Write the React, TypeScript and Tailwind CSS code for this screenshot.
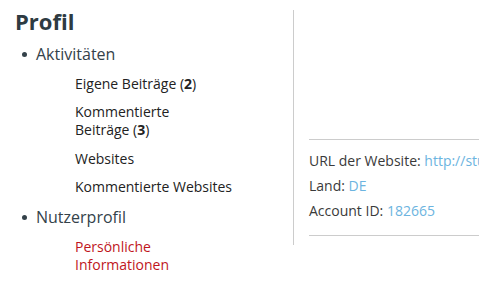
import React from 'react';

const activities = [
  { label: 'Eigene Beiträge', count: 2 },
  { label: 'Kommentierte Beiträge', count: 3, wrap: true },
  { label: 'Websites' },
  { label: 'Kommentierte Websites' },
];

const details = [
  { label: 'URL der Website:', value: 'http://studio-beispiel.de' },
  { label: 'Land:', value: 'DE' },
  { label: 'Account ID:', value: '182665' },
];

function Bullet({ title }: { title: string }) {
  return (
    <div className="flex items-center text-[16px] leading-[24px] text-[#34424a]">
      <span className="ml-[22px] mr-[9px] h-[5px] w-[5px] rounded-full bg-[#34424a]" />
      <span>{title}</span>
    </div>
  );
}

export default function App() {
  return (
    <div className="flex items-start bg-white font-['Open_Sans',sans-serif] overflow-hidden h-[286px]">
      {/* Navigation */}
      <div className="w-[293px] shrink-0 pt-[10px]">
        <h2 className="pl-[15px] text-[22px] font-bold leading-[23px] text-[#2e3b42]">Profil</h2>
        <ul className="mt-[9px]">
          <li>
            <Bullet title="Aktivitäten" />
            <ul className="mt-[4px] pl-[75px] text-[14px] leading-[18px]">
              {activities.map((a) => (
                <li key={a.label} className={`text-[#222] ${a.wrap ? 'pt-[5px] pb-[6px]' : 'py-[5px]'}`}>
                  {a.wrap ? (
                    <>
                      Kommentierte
                      <br />
                      Beiträge (<b>{a.count}</b>)
                    </>
                  ) : (
                    <>
                      {a.label}
                      {a.count !== undefined && (
                        <>
                          {' '}(<b>{a.count}</b>)
                        </>
                      )}
                    </>
                  )}
                </li>
              ))}
            </ul>
          </li>
          <li className="mt-[4px]">
            <Bullet title="Nutzerprofil" />
            <ul className="mt-[4px] pl-[75px] text-[14px] leading-[18px]">
              <li className="py-[5px] text-[#c0161d]">
                Persönliche
                <br />
                Informationen
              </li>
            </ul>
          </li>
        </ul>
      </div>

      {/* Account details */}
      <div className="mt-[10px] min-w-0 flex-1 overflow-hidden border-l border-[#cccccc] pl-[15px] pt-[129px] pb-[9px]">
        <div className="border-t border-b border-[#cccccc] pt-[8px] pb-[12px] text-[14px] leading-[25px] text-[#3a3a3a] whitespace-nowrap">
          {details.map((d) => (
            <div key={d.label}>
              {d.label} <span className="text-[#6cb4e0]">{d.value}</span>
            </div>
          ))}
        </div>
      </div>
    </div>
  );
}
